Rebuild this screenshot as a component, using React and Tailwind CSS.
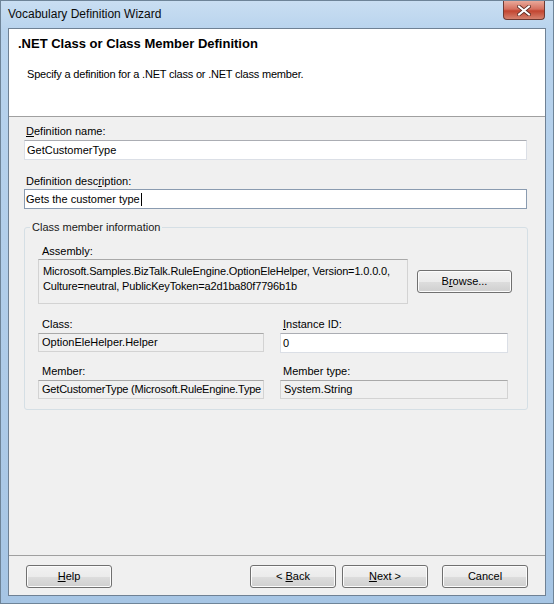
import React from "react";

const btn =
  "h-[23px] w-[86px] rounded-[3px] border border-[#707070] bg-[linear-gradient(to_bottom,#f2f2f2_0%,#ebebeb_50%,#dddddd_51%,#cfcfcf_100%)] shadow-[inset_0_0_0_1px_#fcfcfc] flex items-center justify-center text-[11px] text-black";

const roBox =
  "border border-[#d3d3d3] border-t-[#a9a9a9] bg-[#f0f0f0] flex items-center pl-[3px] overflow-hidden whitespace-nowrap";

function Label({ children, className = "" }) {
  return <div className={"h-[13px] leading-[13px] " + className}>{children}</div>;
}

function CloseButton() {
  return (
    <div className="absolute top-0 right-[8px] w-[42px] h-[19px] rounded-b-[4px] border border-t-0 border-[#6d3a33] bg-[linear-gradient(to_bottom,#e9a99a_0%,#d5705f_45%,#c24530_55%,#d6826f_100%)] flex items-center justify-center">
      <svg width="14" height="11" viewBox="0 0 14 11">
        <path d="M2 1.5 L12 9.5 M12 1.5 L2 9.5" stroke="#5a2a22" strokeWidth="3.6" strokeLinecap="square" />
        <path d="M2 1.5 L12 9.5 M12 1.5 L2 9.5" stroke="#ffffff" strokeWidth="2" strokeLinecap="square" />
      </svg>
    </div>
  );
}

export default function App() {
  return (
    <div className="relative w-[554px] h-[604px] flex flex-col overflow-hidden border border-[#6e8498] bg-[linear-gradient(to_bottom,#c9def2_0%,#b8d3ed_5%,#aecbe8_60%,#a6c5e4_100%)] font-['Liberation_Sans',Arial,sans-serif] text-[11px] text-black">
      {/* title bar */}
      <div className="h-[27px] flex items-center pl-[7px] pb-[1px] text-[12px] text-[#0b0b0b]">
        Vocabulary Definition Wizard
      </div>
      <CloseButton />

      {/* client area */}
      <div className="flex-1 mx-[7px] mb-[7px] border border-[#6f8194] bg-[#f0f0f0] flex flex-col">
        {/* header */}
        <div className="h-[88px] bg-white border-b border-[#a0a0a0] pt-[7px]">
          <div className="pl-[9px] h-[16px] leading-[16px] text-[13px] font-bold">
            .NET Class or Class Member Definition
          </div>
          <div className="pl-[18px] mt-[16px] h-[13px] leading-[13px] tracking-[-0.2px]">
            Specify a definition for a .NET class or .NET class member.
          </div>
        </div>

        {/* body */}
        <div className="pt-[8px] pl-[15px]">
          <Label className="pl-[2px]">
            <span className="underline">D</span>efinition name:
          </Label>
          <div className="mt-[2px] w-[503px] h-[20px] border border-[#dbdfe6] border-t-[#abadb3] bg-white flex items-center pl-[2px]">
            GetCustomerType
          </div>

          <Label className="pl-[2px] mt-[15px]">
            Definition desc<span className="underline">r</span>iption:
          </Label>
          <div className="mt-[1px] w-[503px] h-[20px] border border-[#8a9bb0] bg-white flex items-center pl-[1px]">
            Gets the customer type
            <span className="inline-block w-[1px] h-[13px] bg-black ml-[1px]" />
          </div>

          <fieldset className="mt-[12px] w-[504px] border border-[#d5dfe5] rounded-[3px] px-[13px] pb-[10px]">
            <legend className="-ml-[8px] px-[2px] h-[13px] leading-[13px] text-[#1a1a1a]">
              Class member information
            </legend>

            <Label className="pl-[4px] mt-[11px]">Assembly:</Label>
            <div className="mt-[1px] flex items-center">
              <div className="w-[370px] h-[45px] border border-[#d3d3d3] border-t-[#a9a9a9] bg-[#f0f0f0] pl-[4px] pt-[4px] leading-[15px] tracking-[-0.15px]">
                <div className="whitespace-nowrap">
                  Microsoft.Samples.BizTalk.RuleEngine.OptionEleHelper, Version=1.0.0.0,
                </div>
                <div className="whitespace-nowrap">
                  Culture=neutral, PublicKeyToken=a2d1ba80f7796b1b
                </div>
              </div>
              <div className={btn + " ml-[9px] w-[95px] h-[22px]"}>
                B<span className="underline">r</span>owse...
              </div>
            </div>

            <div className="mt-[14px] flex">
              <div className="w-[226px]">
                <Label className="pl-[4px]">Class:</Label>
                <div className={roBox + " mt-[2px] h-[19px]"}>OptionEleHelper.Helper</div>
              </div>
              <div className="ml-[16px] w-[228px]">
                <Label className="pl-[3px]">
                  <span className="underline">I</span>nstance ID:
                </Label>
                <div className="mt-[2px] h-[20px] border border-[#dbdfe6] border-t-[#abadb3] bg-white flex items-center pl-[2px]">
                  0
                </div>
              </div>
            </div>

            <div className="mt-[12px] flex">
              <div className="w-[226px]">
                <Label className="pl-[4px]">Member:</Label>
                <div className={roBox + " mt-[2px] h-[19px] tracking-[-0.2px]"}>
                  GetCustomerType (Microsoft.RuleEngine.Type
                </div>
              </div>
              <div className="ml-[16px] w-[228px]">
                <Label className="pl-[3px]">Member type:</Label>
                <div className={roBox + " mt-[2px] h-[19px]"}>System.String</div>
              </div>
            </div>
          </fieldset>
        </div>

        {/* footer */}
        <div className="mt-auto h-[40px] border-t border-[#a0a0a0] flex items-start pt-[9px] pl-[17px]">
          <div className={btn}>
            <span className="underline">H</span>elp
          </div>
          <div className={btn + " ml-[138px]"}>
            &lt; <span className="underline ml-[3px]">B</span>ack
          </div>
          <div className={btn + " ml-[6px]"}>
            <span className="underline">N</span>ext &gt;
          </div>
          <div className={btn + " ml-[14px]"}>Cancel</div>
        </div>
      </div>
    </div>
  );
}
